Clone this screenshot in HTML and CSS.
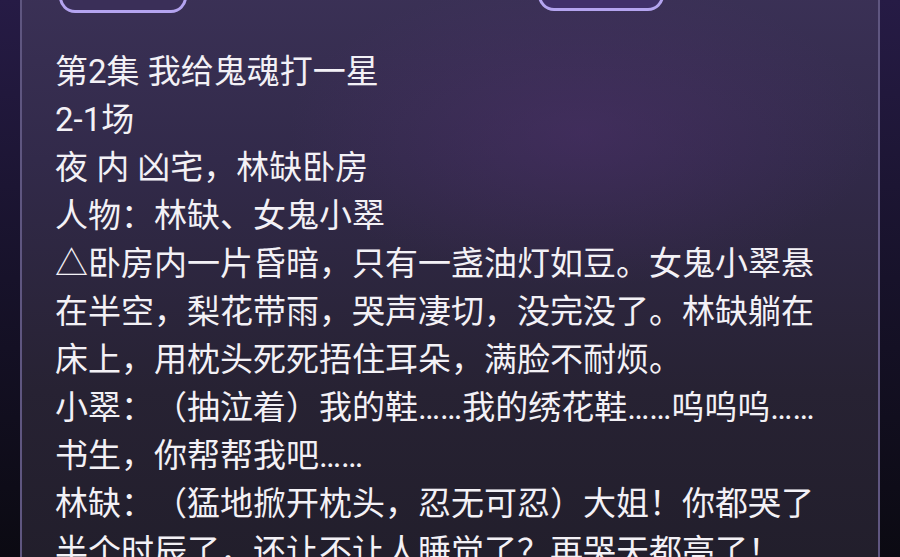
FILE: index.html
```html
<!DOCTYPE html>
<html>
<head>
	<meta charset="UTF-8">
	<title>第2集 我给鬼魂打一星</title>
	<link rel="stylesheet" href="styles.css">
</head>
<body>
	<div class="page">
		<div class="card">
			<div class="actions">
				<button type="button" class="pill first" aria-label="上一集"></button>
				<button type="button" class="pill second" aria-label="下一集"></button>
			</div>
			<div class="script">
				<p>第2集 我给鬼魂打一星</p>
				<p>2-1场</p>
				<p>夜 内 凶宅，林缺卧房</p>
				<p>人物：林缺、女鬼小翠</p>
				<p>△卧房内一片昏暗，只有一盏油灯如豆。女鬼小翠悬在半空，梨花带雨，哭声凄切，没完没了。林缺躺在床上，用枕头死死捂住耳朵，满脸不耐烦。</p>
				<p>小翠：（抽泣着）我的鞋……我的绣花鞋……呜呜呜……书生，你帮帮我吧……</p>
				<p>林缺：（猛地掀开枕头，忍无可忍）大姐！你都哭了半个时辰了，还让不让人睡觉了？再哭天都亮了！</p>
			</div>
		</div>
	</div>
</body>
</html>
```

FILE: styles.css
```css
html, body {
	margin: 0;
	height: 100%;
	overflow: hidden;
}

body {
	background: linear-gradient(180deg, #261b45 0%, #17122a 50%, #0b0a12 100%);
	font-family: Roboto, "Noto Sans CJK SC", sans-serif;
	color: #f3f1f6;
}

.page {
	padding: 0 20px;
}

.card {
	margin-top: -40px;
	border: 2px solid #5f5680;
	border-radius: 18px;
	padding: 0 34px 40px 33px;
	background:
		radial-gradient(ellipse 420px 220px at 560px 170px, rgba(80, 48, 110, 0.45), transparent 70%),
		linear-gradient(180deg, #3c3258 0%, #322a4a 30%, #272233 65%, #201d29 100%);
	min-height: 620px;
}

.actions {
	display: flex;
	gap: 351px;
	padding-left: 4px;
}

.pill {
	height: 51px;
	padding: 0;
	border: 3px solid #b4a4f0;
	border-radius: 16px;
	background: #3a2f58;
}

.pill.first {
	width: 128px;
}

.pill.second {
	width: 126px;
	height: 49px;
	background: #40306a;
}

.script {
	margin-top: 35px;
	width: 775px;
	font-size: 33px;
	line-height: 48px;
	text-spacing-trim: space-all;
}

.script p {
	margin: 0;
}
```
